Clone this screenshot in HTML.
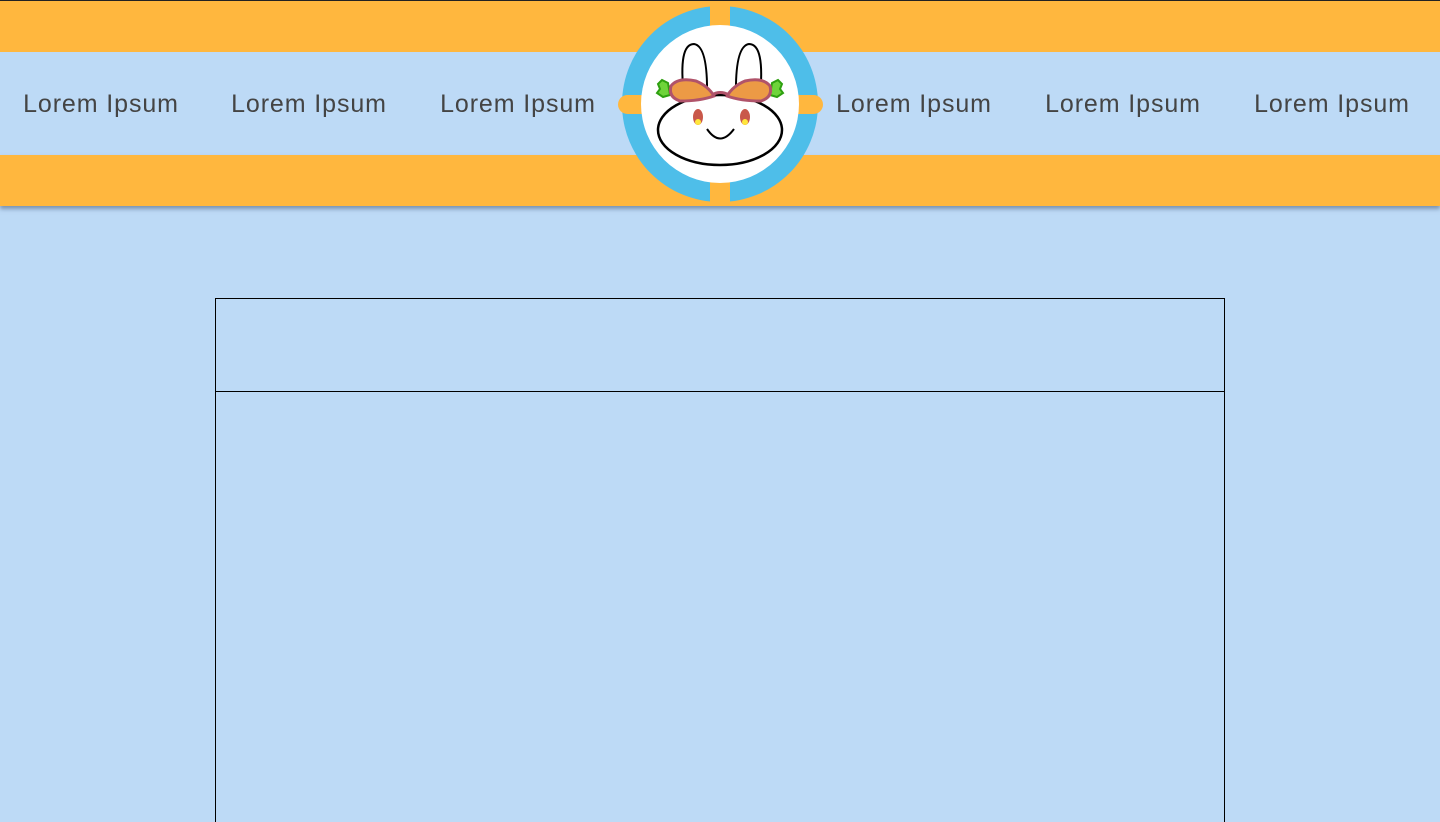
<!DOCTYPE html>
<html><head><meta charset="utf-8"><style>
html,body{margin:0;padding:0;width:1440px;height:822px;overflow:hidden;}
body{background:#bddaf6;position:relative;font-family:"Liberation Sans",sans-serif;}
.top{position:absolute;left:0;top:0;width:1440px;height:1px;background:#222;}
.or1{position:absolute;left:0;top:1px;width:1440px;height:51px;background:#ffb73e;}
.bl{position:absolute;left:0;top:52px;width:1440px;height:103px;background:#bddaf6;}
.or2{position:absolute;left:0;top:155px;width:1440px;height:51px;background:#ffb73e;box-shadow:0 3px 4px rgba(70,90,120,0.55);}
.nav{position:absolute;top:88px;width:200px;text-align:center;font-size:25px;color:#444;letter-spacing:0.9px;line-height:32px;}
.box{position:absolute;left:215px;top:298px;width:1008px;height:560px;border:1px solid #000;}
.div{position:absolute;left:215px;top:391px;width:1010px;height:1px;background:#000;}
svg{position:absolute;left:0;top:0;}
</style></head><body>
<div class="top"></div><div class="or1"></div><div class="bl"></div><div class="or2"></div>
<div class="nav" style="left:1px">Lorem Ipsum</div>
<div class="nav" style="left:209px">Lorem Ipsum</div>
<div class="nav" style="left:418px">Lorem Ipsum</div>
<div class="nav" style="left:814px">Lorem Ipsum</div>
<div class="nav" style="left:1023px">Lorem Ipsum</div>
<div class="nav" style="left:1232px">Lorem Ipsum</div>
<svg width="1440" height="260">
<circle cx="720" cy="104" r="98" fill="#4ebee9"/>
<rect x="618" y="95" width="205" height="19" rx="9.5" fill="#ffb73e"/>
<rect x="710" y="5" width="20" height="198" fill="#ffb73e"/>
<circle cx="720" cy="104" r="79" fill="#fff"/>
<path d="M684 96 Q678 44 694 44 Q708 46 707 96 z" fill="#fff" stroke="#000" stroke-width="2"/>
<path d="M736 96 Q735 46 749 44 Q765 44 760 96 z" fill="#fff" stroke="#000" stroke-width="2"/>
<ellipse cx="720" cy="130" rx="62" ry="35" fill="#fff" stroke="#000" stroke-width="2.5"/>
<path d="M707 129 Q720 148 734 129" fill="none" stroke="#000" stroke-width="2"/>
<ellipse cx="698" cy="117" rx="5" ry="8" fill="#c9584a"/><circle cx="698" cy="122" r="3" fill="#ffe63c"/>
<ellipse cx="745" cy="117" rx="5" ry="8" fill="#c9584a"/><circle cx="745" cy="122" r="3" fill="#ffe63c"/>
<path d="M668 83 l-6 -3 l-4 4 l2 5 l-3 4 l6 4 l7 -2 z" fill="#6ed43a" stroke="#2ea010" stroke-width="2"/>
<path d="M772 83 l6 -3 l4 4 l-2 5 l3 4 l-6 4 l-7 -2 z" fill="#6ed43a" stroke="#2ea010" stroke-width="2"/>
<path d="M714 96 Q700 101 680 101 Q668 97 671 86 Q678 77 696 81 Q708 86 714 96 z" fill="#ec9a45" stroke="#b0536a" stroke-width="3"/>
<path d="M727 96 Q741 101 761 101 Q773 97 770 86 Q763 77 745 81 Q733 86 727 96 z" fill="#ec9a45" stroke="#b0536a" stroke-width="3"/>
<path d="M712 95 Q720 90 729 95" fill="none" stroke="#b0536a" stroke-width="3"/>
</svg>
<div class="box"></div><div class="div"></div>
</body></html>
